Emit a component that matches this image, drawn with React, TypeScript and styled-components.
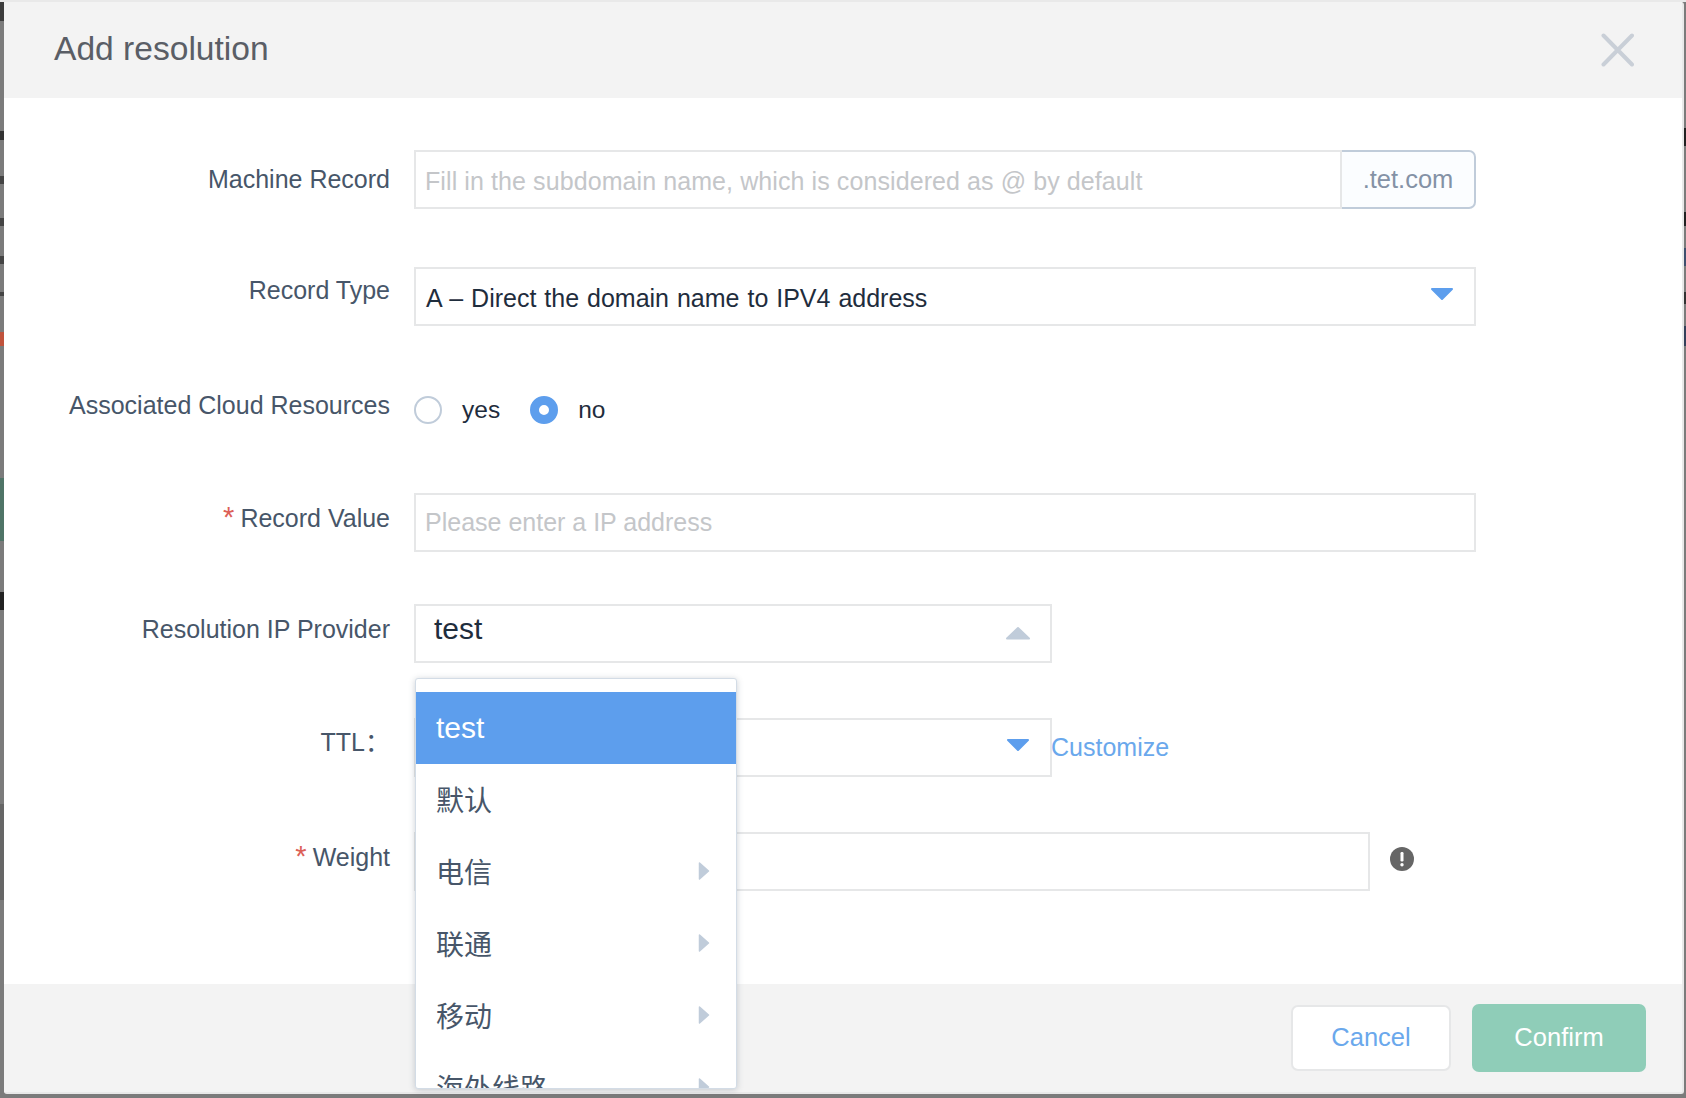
import styled, { createGlobalStyle } from "styled-components";

const GlobalStyle = createGlobalStyle`
  html, body {
    margin: 0;
    padding: 0;
    overflow: hidden;
    font-family: "Liberation Sans", "Noto Sans CJK SC", sans-serif;
  }
  * { box-sizing: border-box; }
`;

const color = {
  label: "#475669",
  value: "#1f2d3d",
  placeholder: "#c4c6c9",
  line: "#e6e7e8",
  blue: "#5d9eed",
  link: "#6aa8ec",
  muted: "#c0ccda",
  panel: "#f3f3f3",
  green: "#8fcdb8",
  red: "#dc5f57",
};

// what shows of the page behind the modal along its edges
const Page = styled.div`
  width: 1686px;
  height: 1098px;
  padding: 2px 2px 4px 4px;
  background-color: #7b7b7b;
  background-image:
    linear-gradient(#e9e9e9, #e9e9e9),
    linear-gradient(
      180deg,
      #3c3c3c 0 21px,
      #7b7b7b 21px 131px,
      #333 131px 140px,
      #7b7b7b 140px 176px,
      #444 176px 184px,
      #7b7b7b 184px 218px,
      #444 218px 226px,
      #7b7b7b 226px 256px,
      #444 256px 264px,
      #7b7b7b 264px 292px,
      #444 292px 296px,
      #7b7b7b 296px 332px,
      #c0533c 332px 346px,
      #7b7b7b 346px 478px,
      #4f7467 478px 541px,
      #7b7b7b 541px 592px,
      #222 592px 610px,
      #7b7b7b 610px 804px,
      #666 804px 900px,
      #7b7b7b 900px
    ),
    linear-gradient(
      180deg,
      #7b7b7b 0 128px,
      #222 128px 146px,
      #7b7b7b 146px 212px,
      #222 212px 226px,
      #7b7b7b 226px 248px,
      #3f4f6e 248px 266px,
      #7b7b7b 266px 292px,
      #333 292px 304px,
      #7b7b7b 304px 326px,
      #34405a 326px 346px,
      #7b7b7b 346px
    );
  background-size: 100% 2px, 4px 100%, 2px 100%;
  background-position: 0 0, 0 0, 100% 0;
  background-repeat: no-repeat;
`;

const Modal = styled.div`
  display: flex;
  flex-direction: column;
  height: 100%;
  background: #fff;
  border-right: 2px solid #e9e9e9;
  border-bottom: 2px solid #e9e9e9;
  border-radius: 3px;
`;

const Header = styled.header`
  display: flex;
  align-items: center;
  justify-content: space-between;
  flex: none;
  height: 96px;
  padding: 0 48px 0 50px;
  background: ${color.panel};
`;

const Title = styled.h2`
  margin: 0 0 3px;
  font-size: 33.6px;
  font-weight: 400;
  color: #5a5e66;
`;

const CloseButton = styled.button`
  display: flex;
  padding: 0;
  border: 0;
  background: none;
`;

const Body = styled.form`
  flex: 1;
  padding-top: 52px;
`;

const Row = styled.div<{ $gap?: number }>`
  display: flex;
  align-items: flex-start;
  min-height: 59px;
  margin-top: ${(p) => p.$gap ?? 0}px;
`;

const Label = styled.label<{ $shift: number }>`
  flex: none;
  width: 386px;
  margin-right: 24px;
  padding-top: ${(p) => p.$shift}px;
  font-size: 25px;
  line-height: 30px;
  text-align: right;
  color: ${color.label};
`;

const Star = styled.span`
  margin-right: 6px;
  font-size: 29px;
  line-height: 1;
  color: ${color.red};
`;

const InputGroup = styled.div`
  display: flex;
  width: 1062px;
  height: 59px;
`;

const TextInput = styled.input<{ $width?: number; $top?: number; $track?: number }>`
  flex: ${(p) => (p.$width ? "none" : "1")};
  width: ${(p) => (p.$width ? `${p.$width}px` : "auto")};
  height: 59px;
  padding: ${(p) => p.$top ?? 0}px 10px 0 9px;
  border: 2px solid ${color.line};
  outline: none;
  font: 25px "Liberation Sans", sans-serif;
  letter-spacing: ${(p) => p.$track ?? 0}px;
  color: ${color.value};
  &::placeholder {
    color: ${color.placeholder};
    opacity: 1;
  }
`;

const Addon = styled.span`
  display: flex;
  align-items: center;
  justify-content: center;
  flex: none;
  width: 134px;
  background: #fbfdff;
  border: 2px solid ${color.muted};
  border-left: 0;
  border-radius: 0 7px 7px 0;
  font-size: 25.5px;
  color: #8492a6;
`;

const Select = styled.div<{ $width: number; $inset?: number; $size?: number; $lift?: number }>`
  position: relative;
  display: flex;
  align-items: center;
  justify-content: space-between;
  flex: none;
  width: ${(p) => p.$width}px;
  height: 59px;
  padding: 0 19px 0 ${(p) => p.$inset ?? 10}px;
  border: 2px solid ${color.line};
  font-size: ${(p) => p.$size ?? 25}px;
  color: ${color.value};
  & > span {
    position: relative;
    top: ${(p) => p.$lift ?? 1}px;
    word-spacing: 1px;
  }
`;

const CaretBox = styled.svg<{ $push: number }>`
  flex: none;
  margin-left: auto;
  margin-bottom: ${(p) => p.$push}px;
`;

const Dropdown = styled.ul`
  position: absolute;
  z-index: 10;
  top: 72px;
  left: -1px;
  width: 322px;
  height: 411px;
  margin: 0;
  padding: 13px 0 0;
  overflow: hidden;
  list-style: none;
  background: #fff;
  border: 1px solid #d3dce6;
  border-radius: 3px;
  box-shadow: 0 1px 6px rgba(71, 86, 105, 0.28);
`;

const Option = styled.li<{ $active?: boolean }>`
  display: flex;
  align-items: center;
  justify-content: space-between;
  height: 72px;
  padding: 0 26px ${(p) => (p.$active ? 0 : 3)}px 20px;
  font-size: ${(p) => (p.$active ? 30 : 28)}px;
  color: ${(p) => (p.$active ? "#fff" : color.label)};
  background: ${(p) => (p.$active ? color.blue : "transparent")};
`;

const LinkText = styled.a`
  margin: 14px 0 0 -1px;
  font-size: 25px;
  line-height: 30px;
  color: ${color.link};
`;

const RadioGroup = styled.div`
  display: flex;
  align-items: center;
  height: 59px;
`;

const RadioDot = styled.span<{ $checked?: boolean }>`
  display: block;
  flex: none;
  width: 28px;
  height: 28px;
  border-radius: 50%;
  border: ${(p) => (p.$checked ? `9.5px solid ${color.blue}` : `2px solid ${color.muted}`)};
  background: #fff;
`;

const RadioText = styled.span`
  margin: 0 30px 0 20px;
  font-size: 24.5px;
  color: ${color.value};
`;

const HintIcon = styled.span`
  display: flex;
  margin: 15px 0 0 20px;
`;

const Footer = styled.footer`
  display: flex;
  justify-content: flex-end;
  align-items: center;
  flex: none;
  gap: 21px;
  height: 108px;
  padding: 0 36px 0 0;
  background: ${color.panel};
`;

const Button = styled.button<{ $primary?: boolean }>`
  width: ${(p) => (p.$primary ? 174 : 160)}px;
  height: ${(p) => (p.$primary ? 68 : 66)}px;
  padding: 0 0 2px;
  border: ${(p) => (p.$primary ? "0" : `2px solid ${color.line}`)};
  border-radius: 7px;
  font: 25.5px "Liberation Sans", sans-serif;
  color: ${(p) => (p.$primary ? "#fff" : color.link)};
  background: ${(p) => (p.$primary ? color.green : "#fff")};
`;

const Caret = ({ up, fill }: { up?: boolean; fill: string }) => (
  <CaretBox $push={up ? 2 : 5} width="26" height="16" viewBox="0 0 26 16">
    <path
      d={up ? "M13 3L24 13.5H2Z" : "M3 3H23L13 13Z"}
      fill={fill}
      stroke={fill}
      strokeWidth="2"
      strokeLinejoin="round"
    />
  </CaretBox>
);

const SubArrow = () => (
  <svg width="12" height="20" viewBox="0 0 12 20">
    <path d="M1.5 2L10.5 10L1.5 18Z" fill={color.muted} stroke={color.muted} strokeWidth="1.5" strokeLinejoin="round" />
  </svg>
);

const providers = [
  { name: "默认" },
  { name: "电信", more: true },
  { name: "联通", more: true },
  { name: "移动", more: true },
  { name: "海外线路", more: true },
];

const App = () => {
  return (
    <Page>
      <GlobalStyle />
      <Modal>
        <Header>
          <Title>Add resolution</Title>
          <CloseButton type="button" aria-label="Close">
            <svg width="34" height="34" viewBox="0 0 34 34">
              <path d="M3.5 2.5L32 31.5M32 2.5L3.5 31.5" stroke="#c9cfd7" strokeWidth="4" strokeLinecap="round" />
            </svg>
          </CloseButton>
        </Header>

        <Body>
          <Row>
            <Label $shift={14}>Machine Record</Label>
            <InputGroup>
              <TextInput
                $top={3}
                $track={0.09}
                placeholder="Fill in the subdomain name, which is considered as @ by default"
              />
              <Addon>.tet.com</Addon>
            </InputGroup>
          </Row>

          <Row $gap={58}>
            <Label $shift={8}>Record Type</Label>
            <Select $width={1062} $lift={2}>
              <span>A – Direct the domain name to IPV4 address</span>
              <Caret fill={color.blue} />
            </Select>
          </Row>

          <Row $gap={54}>
            <Label $shift={10}>Associated Cloud Resources</Label>
            <RadioGroup>
              <RadioDot />
              <RadioText>yes</RadioText>
              <RadioDot $checked />
              <RadioText>no</RadioText>
            </RadioGroup>
          </Row>

          <Row $gap={54}>
            <Label $shift={10}>
              <Star>*</Star>Record Value
            </Label>
            <TextInput $width={1062} placeholder="Please enter a IP address" />
          </Row>

          <Row $gap={52}>
            <Label $shift={10}>Resolution IP Provider</Label>
            <Select $width={638} $inset={18} $size={30} $lift={-5}>
              <span>test</span>
              <Caret up fill={color.muted} />
              <Dropdown>
                <Option $active>test</Option>
                {providers.map((item) => (
                  <Option key={item.name}>
                    {item.name}
                    {item.more && <SubArrow />}
                  </Option>
                ))}
              </Dropdown>
            </Select>
          </Row>

          <Row $gap={55}>
            <Label $shift={9}>TTL：</Label>
            <Select $width={638}>
              <Caret fill={color.blue} />
            </Select>
            <LinkText>Customize</LinkText>
          </Row>

          <Row $gap={55}>
            <Label $shift={10}>
              <Star>*</Star>Weight
            </Label>
            <TextInput $width={956} />
            <HintIcon>
              <svg width="24" height="24" viewBox="0 0 24 24">
                <circle cx="12" cy="12" r="12" fill="#666" />
                <rect x="10.5" y="5" width="3" height="9.5" rx="1.2" fill="#fff" />
                <circle cx="12" cy="17.8" r="1.7" fill="#fff" />
              </svg>
            </HintIcon>
          </Row>
        </Body>

        <Footer>
          <Button type="button">Cancel</Button>
          <Button type="button" $primary>
            Confirm
          </Button>
        </Footer>
      </Modal>
    </Page>
  );
};

export default App;
